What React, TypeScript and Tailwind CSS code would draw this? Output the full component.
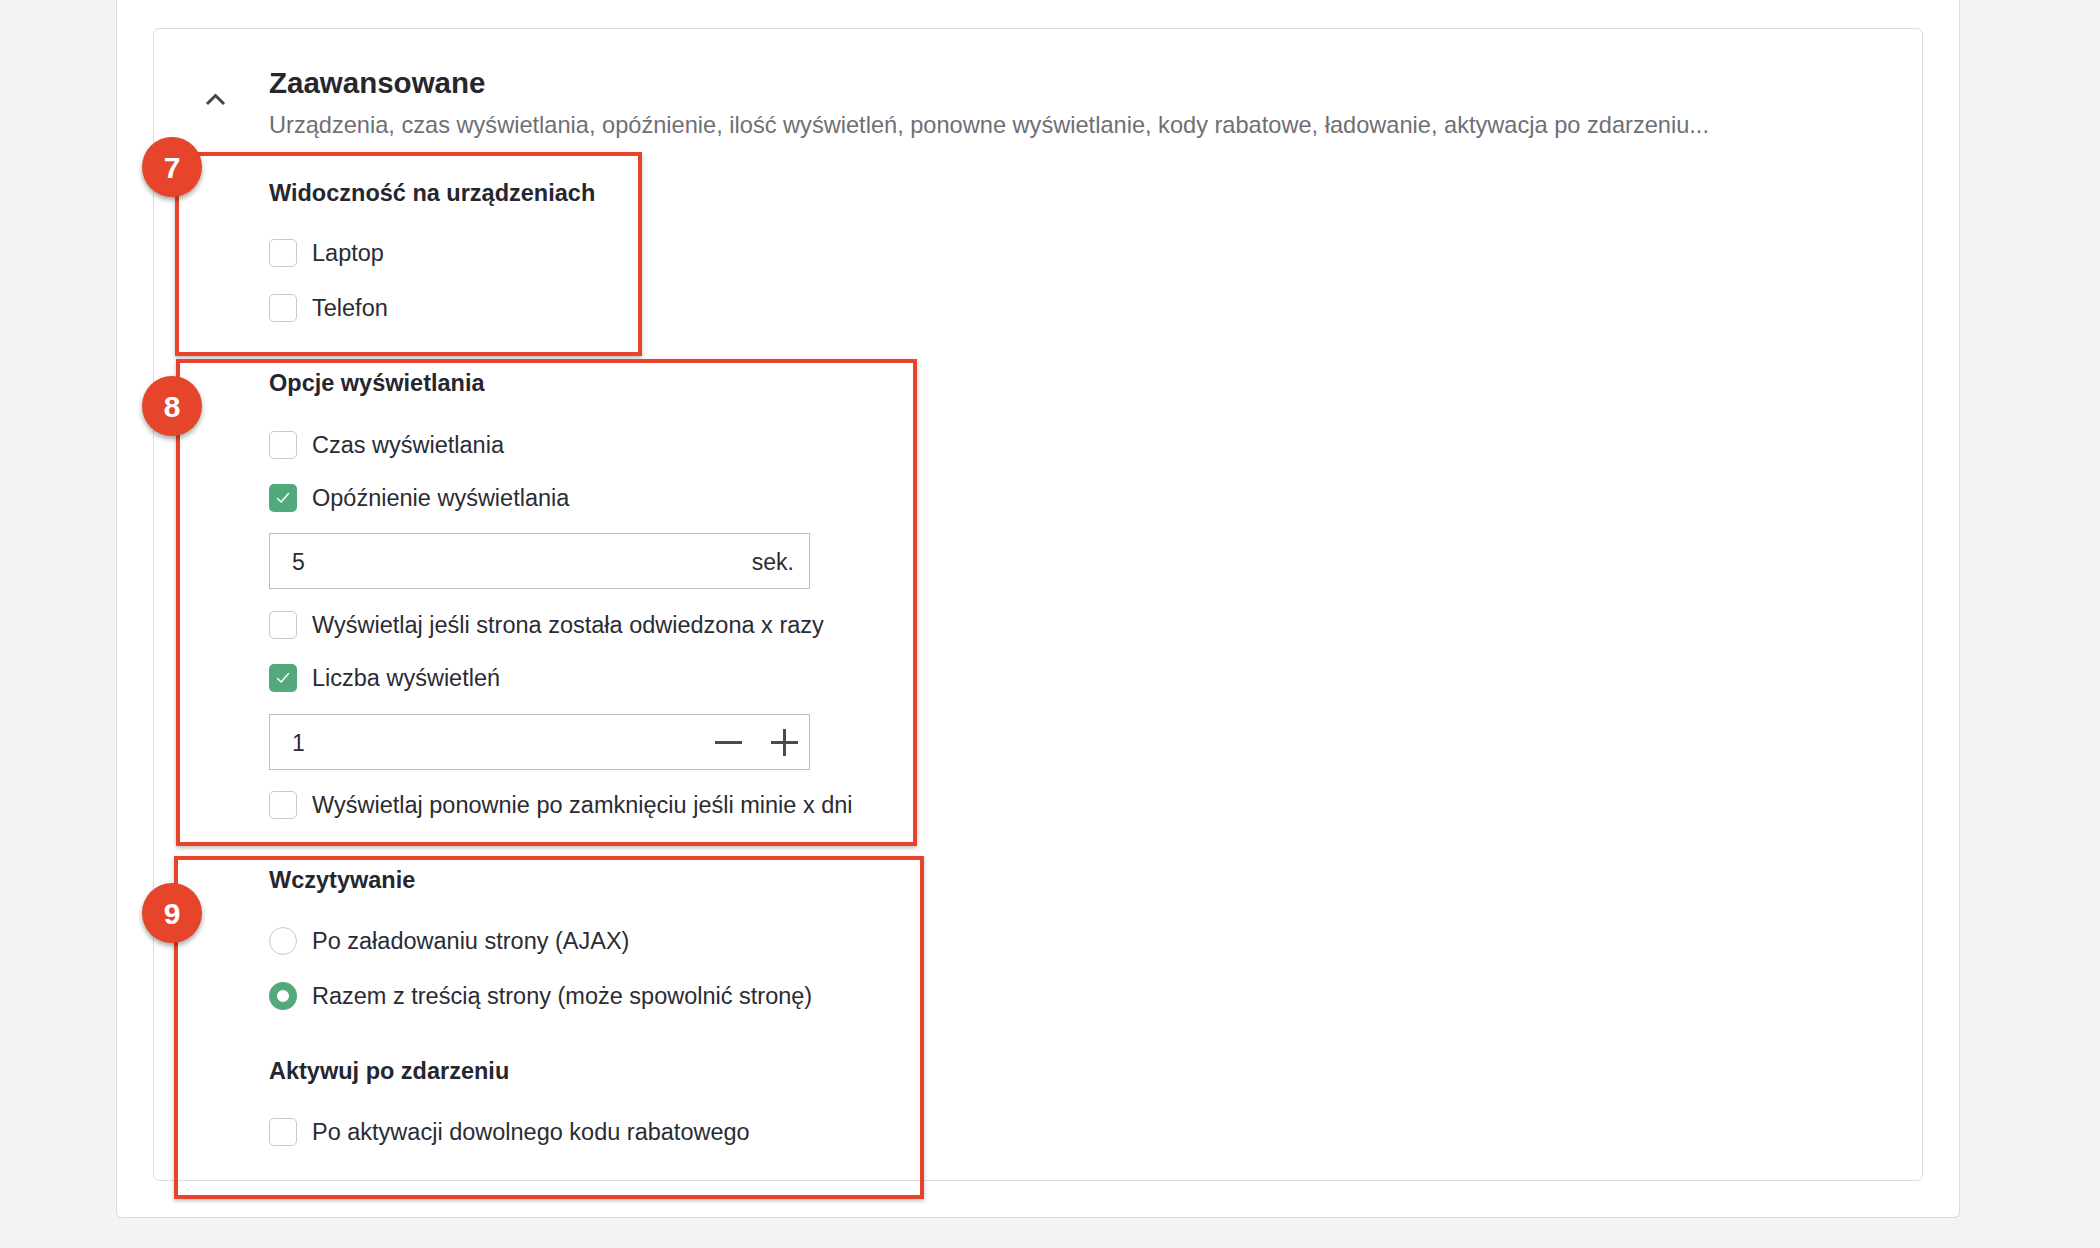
import { ReactNode } from "react";

function Checkbox({ checked = false }: { checked?: boolean }) {
  if (checked) {
    return (
      <span className="flex h-[28px] w-[28px] shrink-0 items-center justify-center rounded-[5px] bg-[#52a97c]">
        <svg width="16" height="16" viewBox="0 0 16 16" fill="none">
          <path d="M2.5 8.5 L6.2 12 L13.5 3.5" stroke="white" strokeWidth="1.4" strokeLinecap="round" strokeLinejoin="round" />
        </svg>
      </span>
    );
  }
  return <span className="block h-[28px] w-[28px] shrink-0 rounded-[5px] border border-[#c9c9c9] bg-white" />;
}

function Radio({ checked = false }: { checked?: boolean }) {
  return checked ? (
    <span className="block h-[28px] w-[28px] shrink-0 rounded-full border-[8px] border-[#52a97c] bg-white" />
  ) : (
    <span className="block h-[28px] w-[28px] shrink-0 rounded-full border border-[#c9c9c9] bg-white" />
  );
}

function Option({ control, label, className = "" }: { control: ReactNode; label: string; className?: string }) {
  return (
    <label className={`flex h-[28px] items-center gap-[15px] text-[23.5px] text-[#2b2b33] ${className}`}>
      {control}
      <span className="pt-[2px]">{label}</span>
    </label>
  );
}

function Heading({ children, className = "" }: { children: ReactNode; className?: string }) {
  return (
    <div className={`flex h-[32px] items-center pt-[2px] text-[23.5px] font-bold text-[#26262e] ${className}`}>{children}</div>
  );
}

function Badge({ n, className }: { n: string; className: string }) {
  return (
    <div
      className={`absolute flex h-[60px] w-[60px] items-center justify-center rounded-full bg-[#e6442b] text-[30px] font-bold text-white shadow-[0_3px_5px_rgba(0,0,0,0.35)] ${className}`}
    >
      {n}
    </div>
  );
}

export default function App() {
  return (
    <div className="relative min-h-screen bg-[#f3f3f3] font-['Liberation_Sans',Arial,sans-serif]">
      {/* outer card, its top is scrolled off screen */}
      <div className="ml-[116px] w-[1844px] rounded-b-[6px] border-x border-b border-[#dcdcdc] bg-white px-[36px] pb-[36px] pt-[28px]">
        <div className="flex rounded-[6px] border border-[#dcdcdc] pb-[34px] pl-[51px] pt-[35px]">
          <div className="w-[64px] shrink-0 pt-[29px]">
            <svg width="21" height="13" viewBox="0 0 21 13" fill="none">
              <path d="M2 11 L10.5 2.5 L19 11" stroke="#45454d" strokeWidth="3" />
            </svg>
          </div>

          <div className="flex-1">
            <div className="flex h-[36px] items-center pt-[2px] text-[29.5px] font-bold text-[#26262e]">Zaawansowane</div>
            <div className="mt-[11px] flex h-[28px] items-center pt-[2px] text-[23.6px] text-[#6f6f75]">
              Urządzenia, czas wyświetlania, opóźnienie, ilość wyświetleń, ponowne wyświetlanie, kody rabatowe, ładowanie, aktywacja po zdarzeniu...
            </div>

            <Heading className="mt-[38px]">Widoczność na urządzeniach</Heading>
            <Option className="mt-[30px]" control={<Checkbox />} label="Laptop" />
            <Option className="mt-[27px]" control={<Checkbox />} label="Telefon" />

            <Heading className="mt-[45px]">Opcje wyświetlania</Heading>
            <Option className="mt-[32px]" control={<Checkbox />} label="Czas wyświetlania" />
            <Option className="mt-[25px]" control={<Checkbox checked />} label="Opóźnienie wyświetlania" />
            <div className="mt-[21px] flex h-[56px] w-[541px] items-center justify-between border border-[#bdbdbd] pl-[22px] pr-[15px] pt-[2px] text-[23px] text-[#2b2b33]">
              <span>5</span>
              <span>sek.</span>
            </div>
            <Option className="mt-[22px]" control={<Checkbox />} label="Wyświetlaj jeśli strona została odwiedzona x razy" />
            <Option className="mt-[25px]" control={<Checkbox checked />} label="Liczba wyświetleń" />
            <div className="mt-[22px] flex h-[56px] w-[541px] items-center border border-[#bdbdbd] pl-[22px] pr-[11px] text-[23px] text-[#2b2b33]">
              <span className="flex-1 pt-[2px]">1</span>
              <svg width="27" height="27" viewBox="0 0 27 27" className="mr-[29px]">
                <path d="M0 13.5 H27" stroke="#4a4a55" strokeWidth="3" />
              </svg>
              <svg width="27" height="27" viewBox="0 0 27 27">
                <path d="M0 13.5 H27 M13.5 0 V27" stroke="#4a4a55" strokeWidth="3" />
              </svg>
            </div>
            <Option className="mt-[21px]" control={<Checkbox />} label="Wyświetlaj ponownie po zamknięciu jeśli minie x dni" />

            <Heading className="mt-[45px]">Wczytywanie</Heading>
            <Option className="mt-[31px]" control={<Radio />} label="Po załadowaniu strony (AJAX)" />
            <Option className="mt-[27px]" control={<Radio checked />} label="Razem z treścią strony (może spowolnić stronę)" />

            <Heading className="mt-[45px]">Aktywuj po zdarzeniu</Heading>
            <Option className="mt-[31px]" control={<Checkbox />} label="Po aktywacji dowolnego kodu rabatowego" />
          </div>
        </div>
      </div>

      {/* annotation frames */}
      <div className="pointer-events-none absolute left-[175px] top-[152px] h-[204px] w-[467px] border-[4px] border-[#e6442b] shadow-[0_2px_4px_rgba(0,0,0,0.25)]" />
      <div className="pointer-events-none absolute left-[176px] top-[359px] h-[487px] w-[741px] border-[4px] border-[#e6442b] shadow-[0_2px_4px_rgba(0,0,0,0.25)]" />
      <div className="pointer-events-none absolute left-[174px] top-[856px] h-[343px] w-[750px] border-[4px] border-[#e6442b] shadow-[0_2px_4px_rgba(0,0,0,0.25)]" />
      <Badge n="7" className="left-[142px] top-[137px]" />
      <Badge n="8" className="left-[142px] top-[376px]" />
      <Badge n="9" className="left-[142px] top-[883px]" />
    </div>
  );
}
